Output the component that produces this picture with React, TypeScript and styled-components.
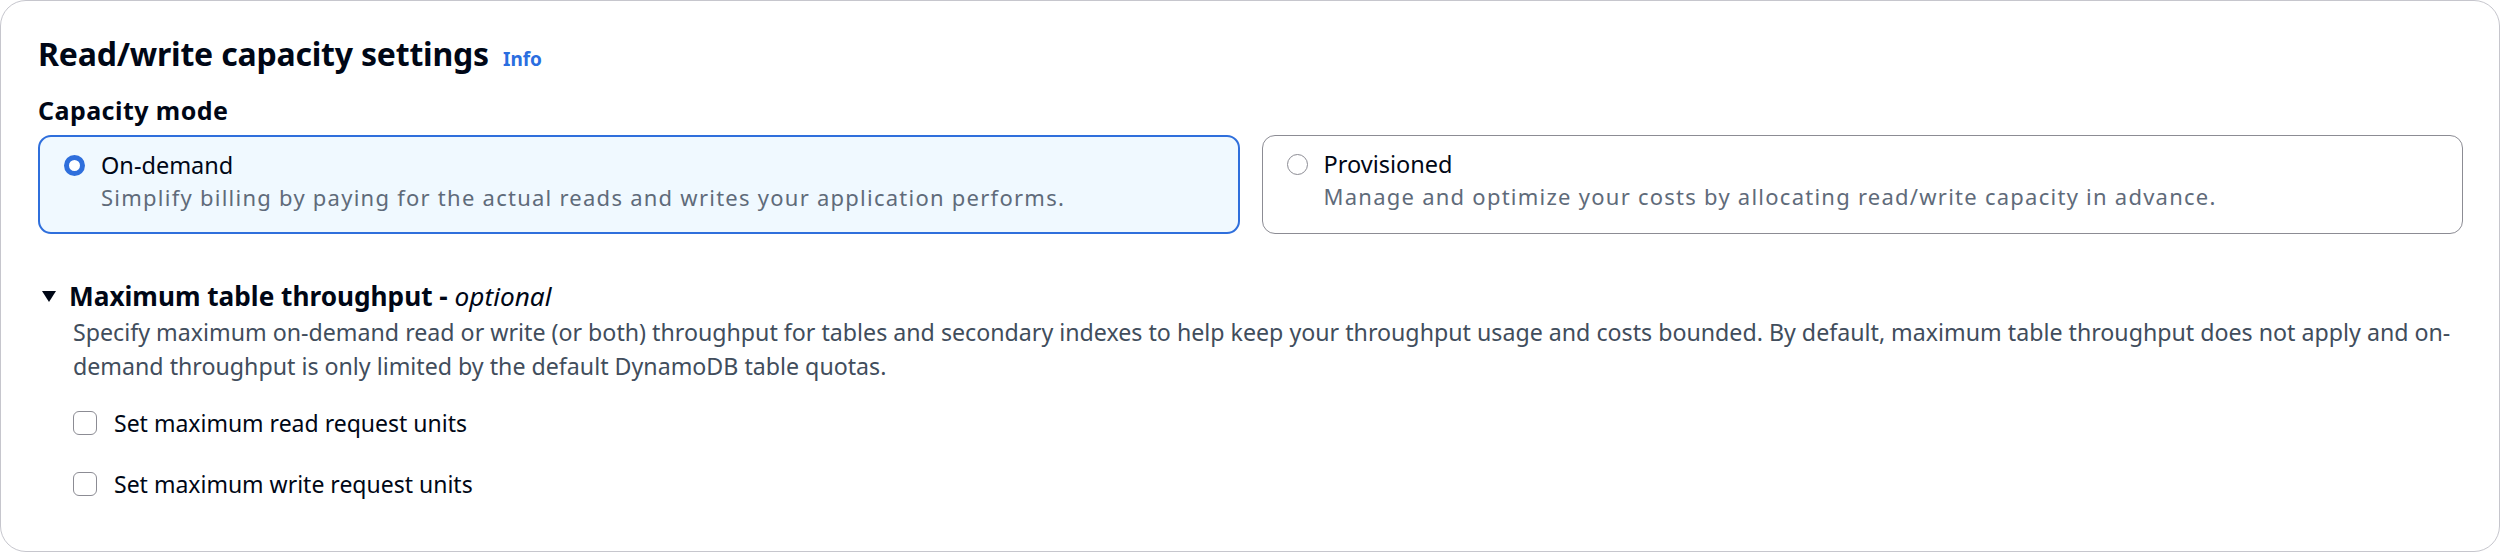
import React, { useState } from "react";
import styled, { createGlobalStyle } from "styled-components";

const GlobalStyle = createGlobalStyle`
  html, body {
    margin: 0;
    padding: 0;
    background: #ffffff;
  }
  body {
    font-family: "Noto Sans", "Open Sans", Arial, sans-serif;
    color: #000716;
  }
`;

const Panel = styled.section`
  box-sizing: border-box;
  width: 2500px;
  height: 552px;
  border: 1.5px solid #c6c6cd;
  border-radius: 26px;
  padding: 34px 22px 0 37px;
  background: #fff;
`;

const HeaderRow = styled.div`
  display: flex;
  align-items: baseline;
  gap: 14px;
`;

const Title = styled.h2`
  margin: 0;
  font-size: 32px;
  line-height: 38px;
  font-weight: 700;
  letter-spacing: -0.2px;
  color: #000716;
`;

const InfoLink = styled.a`
  font-size: 19px;
  font-weight: 700;
  color: #2a6ee0;
  text-decoration: none;
  cursor: pointer;
`;

const FieldLabel = styled.div`
  margin-top: 21px;
  font-size: 25px;
  line-height: 32px;
  font-weight: 700;
  letter-spacing: 0.45px;
`;

const TileGrid = styled.div`
  display: grid;
  grid-template-columns: 1fr 1fr;
  gap: 22px;
  margin: 9px 14px 0 0;
`;

const Tile = styled.label<{ $selected: boolean }>`
  box-sizing: border-box;
  height: 99px;
  display: flex;
  gap: 16px;
  padding: 12px 20px 0 24px;
  border: ${(p) => (p.$selected ? "2.5px solid #2f6fdc" : "1.5px solid #8c8c94")};
  border-radius: 13px;
  background: ${(p) => (p.$selected ? "#f0f9ff" : "#ffffff")};
  cursor: pointer;
`;

const Radio = styled.span<{ $checked: boolean }>`
  box-sizing: border-box;
  flex: none;
  width: 21px;
  height: 21px;
  margin-top: 6px;
  border-radius: 50%;
  border: ${(p) => (p.$checked ? "5.5px solid #2f6fdc" : "1.5px solid #8c8c94")};
  background: #fff;
`;

const TileText = styled.div`
  display: flex;
  flex-direction: column;
`;

const TileLabel = styled.span`
  font-size: 23.5px;
  line-height: 32px;
  color: #000716;
`;

const TileDesc = styled.span`
  font-size: 22px;
  line-height: 32px;
  letter-spacing: 1.25px;
  color: #5f6b7a;
`;

const Expander = styled.div`
  margin-top: 46px;
`;

const ExpanderHeader = styled.div`
  display: flex;
  align-items: center;
  gap: 13px;
  padding-left: 4px;
`;

const Caret = styled.span`
  width: 0;
  height: 0;
  border-left: 7.5px solid transparent;
  border-right: 7.5px solid transparent;
  border-top: 11px solid #000716;
`;

const ExpanderTitle = styled.span`
  font-size: 26.2px;
  line-height: 32px;
  font-weight: 700;

  em {
    font-weight: 400;
  }
`;

const ExpanderBody = styled.div`
  padding-left: 35px;
`;

const Description = styled.p`
  margin: 3px 0 0;
  font-size: 23.2px;
  line-height: 34px;
  color: #414d5c;
`;

const CheckList = styled.div`
  display: flex;
  flex-direction: column;
  gap: 29px;
  margin-top: 24px;
`;

const CheckRow = styled.label`
  display: flex;
  align-items: center;
  gap: 17px;
  height: 32px;
  cursor: pointer;
`;

const Box = styled.span<{ $checked: boolean }>`
  box-sizing: border-box;
  width: 24px;
  height: 24px;
  border: 1.5px solid #8c8c94;
  border-radius: 6px;
  background: ${(p) => (p.$checked ? "#2f6fdc" : "#fff")};
`;

const CheckText = styled.span`
  font-size: 23px;
  color: #000716;
`;

const modes = [
  {
    id: "ondemand",
    label: "On-demand",
    desc: "Simplify billing by paying for the actual reads and writes your application performs.",
  },
  {
    id: "provisioned",
    label: "Provisioned",
    desc: "Manage and optimize your costs by allocating read/write capacity in advance.",
  },
];

export default function App() {
  const [mode, setMode] = useState("ondemand");
  const [maxRead, setMaxRead] = useState(false);
  const [maxWrite, setMaxWrite] = useState(false);

  return (
    <>
      <GlobalStyle />
      <Panel>
        <HeaderRow>
          <Title>Read/write capacity settings</Title>
          <InfoLink>Info</InfoLink>
        </HeaderRow>
        <FieldLabel>Capacity mode</FieldLabel>
        <TileGrid>
          {modes.map((m) => (
            <Tile
              key={m.id}
              $selected={mode === m.id}
              onClick={() => setMode(m.id)}
            >
              <Radio $checked={mode === m.id} />
              <TileText>
                <TileLabel>{m.label}</TileLabel>
                <TileDesc>{m.desc}</TileDesc>
              </TileText>
            </Tile>
          ))}
        </TileGrid>
        <Expander>
          <ExpanderHeader>
            <Caret />
            <ExpanderTitle>
              Maximum table throughput - <em>optional</em>
            </ExpanderTitle>
          </ExpanderHeader>
          <ExpanderBody>
            <Description>
              Specify maximum on-demand read or write (or both) throughput for
              tables and secondary indexes to help keep your throughput usage
              and costs bounded. By default, maximum table throughput does not
              apply and on-demand throughput is only limited by the default
              DynamoDB table quotas.
            </Description>
            <CheckList>
              <CheckRow onClick={() => setMaxRead(!maxRead)}>
                <Box $checked={maxRead} />
                <CheckText>Set maximum read request units</CheckText>
              </CheckRow>
              <CheckRow onClick={() => setMaxWrite(!maxWrite)}>
                <Box $checked={maxWrite} />
                <CheckText>Set maximum write request units</CheckText>
              </CheckRow>
            </CheckList>
          </ExpanderBody>
        </Expander>
      </Panel>
    </>
  );
}
